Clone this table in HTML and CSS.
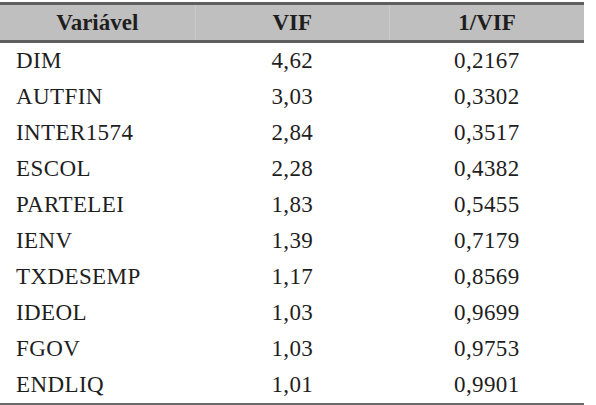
FILE: index.html
```html
<!DOCTYPE html>
<html>
<head>
    <title>VIF</title>
    <link rel="stylesheet" href="styles.css">
</head>
<body>
    <table class="vif-table">
        <thead>
            <tr>
                <th>Variável</th>
                <th>VIF</th>
                <th>1/VIF</th>
            </tr>
        </thead>
        <tbody>
            <tr><td class="name">DIM</td><td>4,62</td><td>0,2167</td></tr>
            <tr><td class="name">AUTFIN</td><td>3,03</td><td>0,3302</td></tr>
            <tr><td class="name">INTER1574</td><td>2,84</td><td>0,3517</td></tr>
            <tr><td class="name">ESCOL</td><td>2,28</td><td>0,4382</td></tr>
            <tr><td class="name">PARTELEI</td><td>1,83</td><td>0,5455</td></tr>
            <tr><td class="name">IENV</td><td>1,39</td><td>0,7179</td></tr>
            <tr><td class="name">TXDESEMP</td><td>1,17</td><td>0,8569</td></tr>
            <tr><td class="name">IDEOL</td><td>1,03</td><td>0,9699</td></tr>
            <tr><td class="name">FGOV</td><td>1,03</td><td>0,9753</td></tr>
            <tr><td class="name">ENDLIQ</td><td>1,01</td><td>0,9901</td></tr>
        </tbody>
    </table>
</body>
</html>
```

FILE: styles.css
```css
body {
    margin: 0;
    background-color: #ffffff;
    font-family: "Liberation Serif", "Times New Roman", serif;
    color: #1e1e1e;
}

.vif-table {
    width: 584px;
    margin-top: 2px;
    border-collapse: collapse;
    font-size: 23px;
}

.vif-table th {
    height: 35px;
    padding: 0;
    background-color: #bfbfbf;
    border-top: 3px solid #5f5f5f;
    border-bottom: 3px solid #5f5f5f;
    border-left: 1px solid #c9c9c9;
    font-weight: bold;
    text-align: center;
    width: 195px;
}

.vif-table th:first-child {
    border-left: none;
}

.vif-table td {
    height: 36px;
    padding: 0;
    text-align: center;
    letter-spacing: 0.4px;
}

.vif-table td.name {
    text-align: left;
    padding-left: 16px;
}

.vif-table tbody tr:last-child td {
    border-bottom: 3px solid #6a6a6a;
}
```
